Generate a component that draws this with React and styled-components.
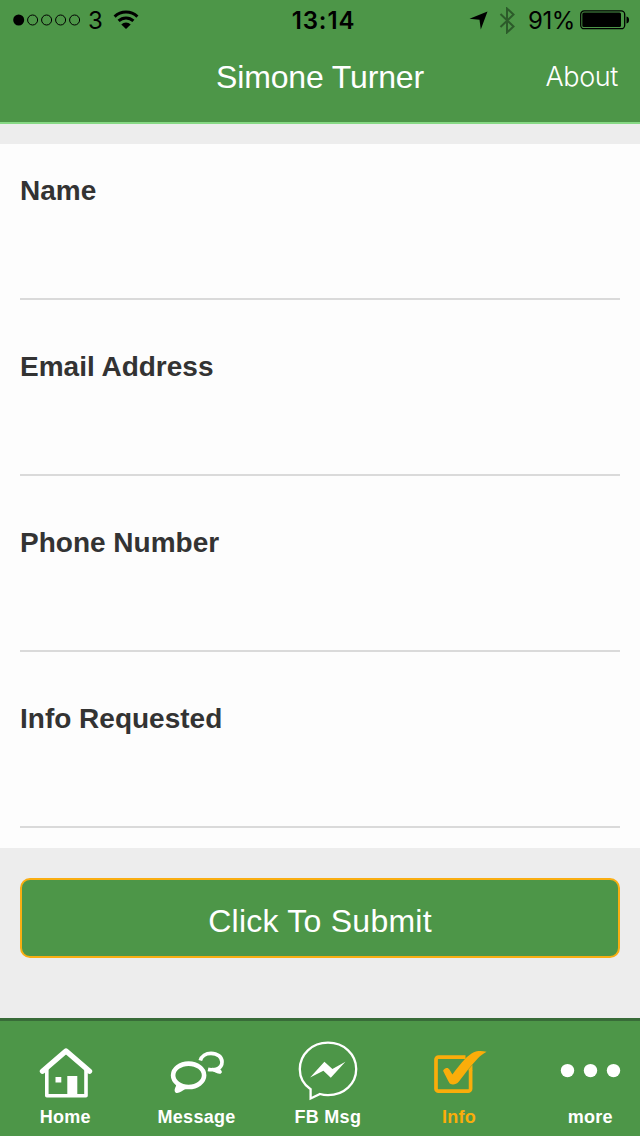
import { useState } from "react";
import styled, { createGlobalStyle } from "styled-components";

const fields = [
  { name: "name", label: "Name" },
  { name: "email", label: "Email Address" },
  { name: "phone", label: "Phone Number" },
  { name: "info", label: "Info Requested" },
];

const HomeIcon = () => (
  <StTabIcon viewBox="0 0 64 64">
    <path
      d="M9.5 31.2 33 11l23.5 20.2"
      strokeWidth="5.4"
      strokeLinecap="round"
      strokeLinejoin="round"
    />
    <path d="M13.8 29v26.7H53V29" strokeWidth="3.6" strokeLinejoin="round" />
    <path d="M34.3 36h10v19h-10zM22.5 37h5.8v5.5h-5.8z" fill="currentColor" stroke="none" />
  </StTabIcon>
);

const MessageIcon = () => (
  <StTabIcon viewBox="0 0 64 64">
    <ellipse cx="23.6" cy="35.3" rx="15.5" ry="11.7" strokeWidth="4.6" />
    <path
      d="M11 43.5c1 2.5-1.8 4.5-1.3 7.5.4 2.200 2.500 2.400 4.500 1.500 3-1.200 5-3.300 8.800-4.200z"
      fill="currentColor"
      stroke="none"
    />
    <path
      d="M35.3 20.5C36.5 16 41 13.300 46 13.300c6.500 0 11 3.800 11 8.700 0 3-1.500 5.200-4 6.700.3 1.300 1.400 2 2 3.200-3 0-4.500-2.300-7.500-2.200-1.700.1-3.200 0-4.500-.3"
      strokeWidth="3.7"
      strokeLinejoin="round"
    />
    <path d="M46 28.5l7-1.5 2.5 6.5-7-2z" fill="currentColor" stroke="none" />
  </StTabIcon>
);

const MessengerIcon = () => (
  <StTabIcon viewBox="0 0 64 64">
    <path
      d="M14.6 58.500v-9.300C7.600 44.600 3.800 37.500 3.800 29.300 3.800 14.200 16 2.700 32 2.700s28.200 11.500 28.200 26.300S48 55.200 32 55.200c-3 0-5.500-.4-8-1.200z"
      strokeWidth="2.3"
    />
    <path
      d="m14.1 37.500 14.300-15.800 8 7.300 13-7.300-14.600 16-7.400-7z"
      fill="currentColor"
      stroke="none"
    />
  </StTabIcon>
);

const CheckIcon = () => (
  <StTabIcon viewBox="0 0 64 64">
    <path
      d="M38.5 17.200H11.500a2.500 2.500 0 0 0-2.500 2.500v29a2.500 2.500 0 0 0 2.500 2.500h29.600a2.500 2.500 0 0 0 2.500-2.500V30"
      strokeWidth="3.7"
    />
    <path d="M45.450 30.500h-3.700v-1.300l3.700-4.500z" fill="currentColor" stroke="none" />
    <path
      d="M16.200 31C16 29.500 18.500 28 20 28c1 0 1.800.5 2.400 1.600l3 5C29.500 29 34 23 38.200 18.800c4-4 8.500-7.500 13.500-7.800 2.500-.2 5 .1 7.900.7-3.500 1.800-6 3.800-8.400 6.200C44 25.200 38 33.500 31.700 41.700c-1.500 2-4 2.800-6 2.700-1.500-.1-2.800-.6-3.600-2C20 39 18.500 35.500 16.200 31z"
      fill="currentColor"
      stroke="none"
    />
  </StTabIcon>
);

const MoreIcon = () => (
  <StTabIcon viewBox="0 0 64 64">
    <g fill="currentColor" stroke="none">
      <circle cx="9.5" cy="30.6" r="6.7" />
      <circle cx="32.5" cy="30.6" r="6.7" />
      <circle cx="55.5" cy="30.6" r="6.7" />
    </g>
  </StTabIcon>
);

const tabs = [
  { label: "Home", Icon: HomeIcon },
  { label: "Message", Icon: MessageIcon },
  { label: "FB Msg", Icon: MessengerIcon },
  { label: "Info", Icon: CheckIcon },
  { label: "more", Icon: MoreIcon },
];

const StatusBar = () => (
  <StStatusBar>
    <StStatusLeft>
      <svg width="68" height="12" viewBox="0 0 68 12">
        <circle cx="5.7" cy="6" r="5.5" />
        {[19.6, 33.6, 47.6, 61.6].map((cx) => (
          <circle key={cx} cx={cx} cy="6" r="5" fill="none" stroke="#000" strokeWidth="1" />
        ))}
      </svg>
      <StCarrier>3</StCarrier>
      <svg width="26" height="20" viewBox="0 0 26 20">
        <g fill="none" stroke="#000" strokeWidth="3">
          <path d="M1.600 6.600a16.500 16.500 0 0 1 22.800 0" />
          <path d="M5.600 10.900a10.600 10.600 0 0 1 14.800 0" />
        </g>
        <path d="M13 19 8.300 14.500a6.600 6.600 0 0 1 9.400 0z" />
      </svg>
    </StStatusLeft>
    <StClock>13:14</StClock>
    <StStatusRight>
      <svg width="19" height="19" viewBox="0 0 19 19">
        <path d="M18.500.5 11.800 18.500 10.500 8.800.5 7.800z" />
      </svg>
      <StBluetooth width="17" height="27" viewBox="0 0 17 27">
        <path d="m1.500 7 13 12.500-6.500 6V1.500l6.500 6L1.500 20" />
      </StBluetooth>
      <StPercent>91%</StPercent>
      <svg width="50" height="20" viewBox="0 0 50 20">
        <rect x=".7" y=".9" width="44" height="17.8" rx="3.5" fill="none" stroke="#000" strokeWidth="1.3" />
        <rect x="2.3" y="2.5" width="38.7" height="14.6" rx="1.5" />
        <path d="M46.500 6.500c2 .5 2.500 1.800 2.500 3.500s-.5 3-2.500 3.500z" />
      </svg>
    </StStatusRight>
  </StStatusBar>
);

const App = () => {
  const [active, setActive] = useState("Info");

  const handleSubmit = (e) => {
    e.preventDefault();
  };

  return (
    <>
      <GlobalStyle />
      <StPage>
        <StHeader>
          <StatusBar />
          <StNav>
            <StTitle>Simone Turner</StTitle>
            <StAbout>About</StAbout>
          </StNav>
        </StHeader>
        <StForm onSubmit={handleSubmit}>
          <StFields>
            {fields.map(({ name, label }) => (
              <StField key={name}>
                <StLabel htmlFor={name}>{label}</StLabel>
                <StInput id={name} name={name} type="text" />
              </StField>
            ))}
          </StFields>
          <StSubmit>Click To Submit</StSubmit>
        </StForm>
        <StTabBar>
          {tabs.map(({ label, Icon }) => (
            <StTab key={label} $active={active === label} onClick={() => setActive(label)}>
              <Icon />
              {label}
            </StTab>
          ))}
        </StTabBar>
      </StPage>
    </>
  );
};

const GlobalStyle = createGlobalStyle`
  * {
    box-sizing: border-box;
  }
  body {
    margin: 0;
    font-family: "Liberation Sans", Arial, sans-serif;
    -webkit-font-smoothing: antialiased;
  }
  svg {
    display: block;
    flex-shrink: 0;
  }
`;

const StPage = styled.div`
  width: 640px;
  height: 1136px;
  display: flex;
  flex-direction: column;
  overflow: hidden;
  background-color: #ededed;
`;

const StHeader = styled.header`
  height: 124px;
  background-color: #4d9648;
  border-bottom: 2px solid #87d985;
`;

const StStatusBar = styled.div`
  height: 40px;
  padding: 0 10px 0 13px;
  display: grid;
  grid-template-columns: 1fr auto 1fr;
  align-items: center;
  font-family: Inter, sans-serif;
  font-size: 24px;
  line-height: 38px;
`;

const StStatusLeft = styled.div`
  display: flex;
  align-items: center;
`;

const StCarrier = styled.span`
  margin: 0 10px 0 7px;
  padding-top: 2px;
`;

const StClock = styled.span`
  padding: 2px 0 0 4px;
  font-weight: 600;
  letter-spacing: 0.9px;
`;

const StStatusRight = styled.div`
  display: flex;
  align-items: center;
  justify-content: flex-end;
`;

const StBluetooth = styled.svg`
  margin: 0 12px 0 11px;
  fill: none;
  stroke: #2c5b2a;
  stroke-width: 2;
`;

const StPercent = styled.span`
  margin-right: 5px;
  padding-top: 2px;
  letter-spacing: -0.4px;
`;

const StNav = styled.div`
  height: 74px;
  padding: 0 22px;
  display: grid;
  grid-template-columns: 1fr auto 1fr;
  align-items: center;
  color: #fff;
`;

const StTitle = styled.h1`
  grid-column: 2;
  margin: 0;
  font-size: 32px;
  font-weight: 400;
  line-height: 74px;
  letter-spacing: -0.15px;
`;

const StAbout = styled.a`
  justify-self: end;
  padding-bottom: 2px;
  font-family: Inter, sans-serif;
  font-size: 27px;
  font-weight: 300;
  letter-spacing: -0.4px;
`;

const StForm = styled.form`
  flex: 1;
  padding-top: 20px;
  display: flex;
  flex-direction: column;
`;

const StFields = styled.div`
  background-color: #fdfdfd;
`;

const StField = styled.div`
  height: 176px;
  padding: 31px 20px 20px;
  display: flex;
  flex-direction: column;
`;

const StLabel = styled.label`
  color: #333;
  font-size: 28px;
  font-weight: 700;
  line-height: 32px;
`;

const StInput = styled.input`
  flex: 1;
  width: 100%;
  padding: 0;
  border: none;
  border-bottom: 2px solid #dadada;
  background: transparent;
  font-size: 28px;
  outline: none;
`;

const StSubmit = styled.button`
  height: 80px;
  margin: 30px 20px 0;
  padding: 6px 0 0;
  color: #fff;
  background-color: #4d9648;
  border: 2px solid #f9ae12;
  border-radius: 10px;
  font-family: inherit;
  font-size: 32px;
  letter-spacing: 0.25px;
`;

const StTabBar = styled.nav`
  height: 118px;
  margin-left: -0.3px;
  display: grid;
  grid-template-columns: repeat(5, 131.25px);
  overflow: hidden;
  background-color: #4d9648;
  border-top: 3px solid #386b38;
`;

const StTab = styled.button`
  padding: 19px 0 0;
  display: flex;
  flex-direction: column;
  align-items: center;
  border: none;
  background: none;
  color: ${({ $active }) => ($active ? "#faad0a" : "#fff")};
  font-family: inherit;
  font-size: 18px;
  font-weight: 700;
  line-height: 26px;
  letter-spacing: 0.3px;
`;

const StTabIcon = styled.svg`
  width: 64px;
  height: 64px;
  fill: none;
  stroke: currentColor;
`;

export default App;
